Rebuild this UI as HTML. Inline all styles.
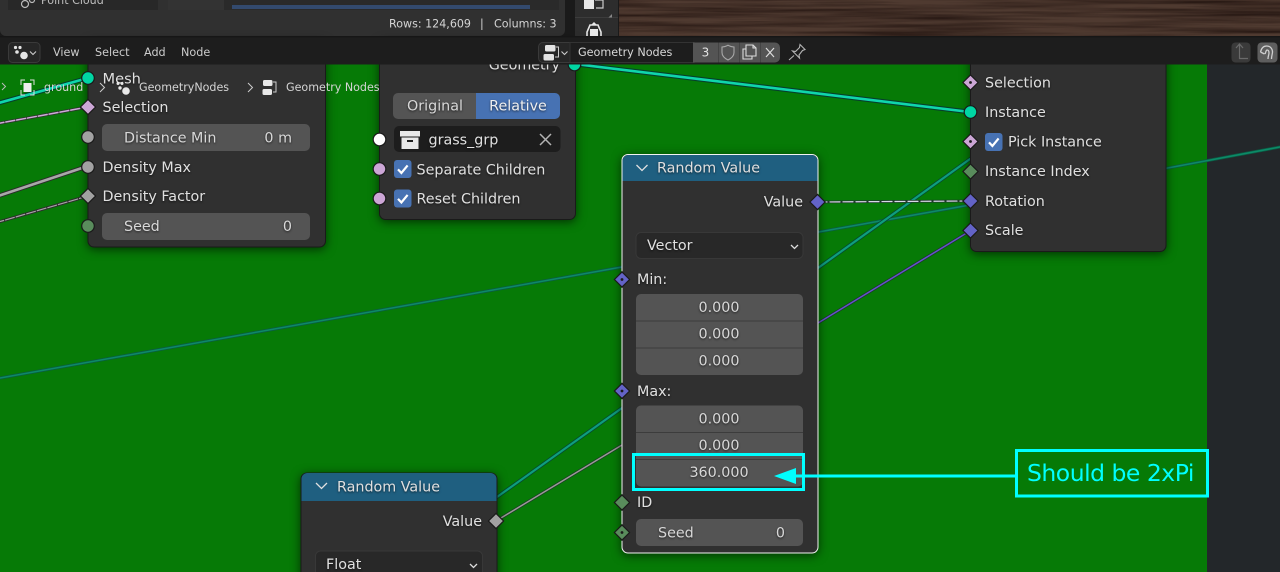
<!DOCTYPE html>
<html><head><meta charset="utf-8">
<style>
html,body{margin:0;padding:0;width:1280px;height:572px;overflow:hidden;background:#1d1d1d}
svg{display:block;position:absolute;left:0;top:0}
text{font-family:"DejaVu Sans",sans-serif;font-size:14.3px;fill:#e0e0e0}
.t{filter:drop-shadow(0 1px 1px rgba(0,0,0,.6))}
.h{font-size:11.2px;fill:#cccccc}
.b{font-size:11.1px;fill:#d4d4d4}
.f{fill:#d8d8d8}
.node{filter:drop-shadow(0 2px 5px rgba(0,0,0,.6))}
.r{text-anchor:end}.m{text-anchor:middle}
</style></head><body>
<svg width="1280" height="572" viewBox="0 0 1280 572" xmlns="http://www.w3.org/2000/svg">
<defs>
<filter id="wood" x="0" y="0" width="100%" height="100%" color-interpolation-filters="sRGB">
<feTurbulence type="fractalNoise" baseFrequency="0.006 0.22" numOctaves="4" seed="7"/>
<feColorMatrix values="0 0 0 0 .16  0 0 0 0 .10  0 0 0 0 .08  2 0 0 0 -.65"/>
</filter>
<g id="dia"><path d="M0-7.6 7.6 0 0 7.6-7.6 0Z" stroke="#1a1a1a" stroke-width="1.2"/></g>
<g id="dot"><path d="M0-7.6 7.6 0 0 7.6-7.6 0Z" stroke="#1a1a1a" stroke-width="1.2"/><circle r="1.4" fill="#1a1a1a"/></g>
<g id="cir"><circle r="6.3" stroke="#1a1a1a" stroke-width="1.2"/></g>
<g id="chk"><rect width="17.5" height="18" rx="3" fill="#4772b3"/><path d="M4 9.4 7.4 13 13.6 5.4" fill="none" stroke="#fff" stroke-width="2.2"/></g>
</defs>

<!-- top area -->
<rect x="0" y="0" width="1280" height="37" fill="#1a1a1a"/>
<path d="M0 0H565V30a6 6 0 0 1-6 6H6a6 6 0 0 1-6-6Z" fill="#303030"/>
<rect x="8" y="0" width="150" height="10" fill="#282828"/>
<rect x="168" y="0" width="391" height="10" fill="#2a2a2a"/>
<rect x="168" y="0" width="56" height="10" fill="#333"/>
<rect x="232" y="5" width="298" height="4" fill="#334a6e"/>
<text x="41" y="4" class="b" style="fill:#bdbdbd">Point Cloud</text>
<circle cx="25" cy="4" r="3.5" fill="none" stroke="#bbb" stroke-width="1.2"/>
<circle cx="32" cy="0" r="2.5" fill="none" stroke="#bbb" stroke-width="1.2"/>
<text x="389" y="27.5" class="b">Rows: 124,609</text>
<text x="480" y="27.5" class="b">|</text>
<text x="494" y="27.5" class="b">Columns: 3</text>
<rect x="575" y="0" width="43" height="36" fill="#2d2d2d"/>
<rect x="575" y="17" width="43" height="1" fill="#3c3c3c"/>
<rect x="619" y="0" width="661" height="36" fill="#4f3a30"/>
<rect x="619" y="0" width="661" height="36" filter="url(#wood)"/>
<path d="M584 0H594V9H584Z" fill="#e8e8e8"/><path d="M595 0H603V8H596" fill="none" stroke="#ccc" stroke-width="1.2"/>
<path d="M612 14l-3.500 3.500H612Z" fill="#888"/>
<path d="M587 36v-4l3-7h8l3 7v4" fill="none" stroke="#e4e4e4" stroke-width="1.6"/><rect x="590" y="29" width="8" height="7" fill="#e8e8e8"/><path d="M594 22l3 3h-6Z" fill="#e8e8e8"/>

<!-- editor background -->
<rect x="0" y="64" width="1207" height="508" fill="#067a06"/>
<rect x="1207" y="64" width="73" height="508" fill="#23272a"/>

<!-- wires -->
<g fill="none" stroke-linecap="round">
<path d="M0 378 622 267 970 205 1280 147" stroke="#0a5c44" stroke-width="3"/>
<path d="M0 378 622 267 970 205 1280 147" stroke="#0d8a68" stroke-width="1.500"/>
<path d="M497 497 622 408 818 268 970 159" stroke="#054a30" stroke-width="3.800"/>
<path d="M497 497 622 408 818 268 970 159" stroke="#0e9e7e" stroke-width="2.200"/>
<path d="M496 521 622 445 818 323 970 231" stroke="#223" stroke-width="3" opacity=".7"/>
<path d="M496 521 622 445" stroke="#9c9a98" stroke-width="1.500"/>
<path d="M818 323 970 231" stroke="#6552cc" stroke-width="1.500"/>
<path d="M575 64 970 112" stroke="#06402c" stroke-width="4.800"/>
<path d="M575 64 970 112" stroke="#0fd6ac" stroke-width="2.600"/>
<path d="M817 202 970 201" stroke="#1f3a2a" stroke-width="2.800"/>
<path d="M817 202 970 201" stroke="#d8d8e8" stroke-width="1.200" stroke-dasharray="10 3"/>
<path d="M-5 104 88 78" stroke="#06402c" stroke-width="4.800"/>
<path d="M-5 104 88 78" stroke="#0fd6ac" stroke-width="2.600"/>
<path d="M-5 124 88 107" stroke="#2a3a2a" stroke-width="3.200"/>
<path d="M-5 124 88 107" stroke="#cfa8da" stroke-width="1.500" stroke-dasharray="9 2"/>
<path d="M-5 197 88 166" stroke="#2c2c2c" stroke-width="4.500"/>
<path d="M-5 197 88 166" stroke="#a8a8a8" stroke-width="2.600"/>
<path d="M-5 223 88 196" stroke="#2c2c2c" stroke-width="3"/>
<path d="M-5 223 88 196" stroke="#a4a4a4" stroke-width="1.200" stroke-dasharray="9 2"/>
</g>

<!-- node 1 -->
<g class="node"><rect x="88" y="40" width="237.500" height="207" rx="6" fill="#303030" stroke="#1a1a1a"/></g>
<rect x="102" y="124" width="208" height="27" rx="5" fill="#545454"/>
<rect x="102" y="213" width="208" height="27" rx="5" fill="#545454"/>
<g class="t">
<text x="102.500" y="83.500" style="font-size:14.600px">Mesh</text>
<text x="102.500" y="112">Selection</text>
<text x="124" y="142.500" class="f">Distance Min</text>
<text x="292" y="142.500" class="f r">0 m</text>
<text x="102.500" y="172">Density Max</text>
<text x="102.500" y="201">Density Factor</text>
<text x="124" y="231" class="f">Seed</text>
<text x="292" y="231" class="f r">0</text>
</g>
<use href="#cir" x="88" y="78" fill="#00d6a3"/>
<use href="#dia" x="88" y="107" fill="#cca6d6"/>
<use href="#cir" x="88" y="137" fill="#a1a1a1"/>
<use href="#cir" x="88" y="167" fill="#a1a1a1"/>
<use href="#dia" x="88" y="196" fill="#a1a1a1"/>
<use href="#cir" x="88" y="226" fill="#598c5c"/>

<!-- node 2 -->
<g class="node"><rect x="379.500" y="40" width="196" height="179.500" rx="6" fill="#303030" stroke="#1a1a1a"/></g>
<path d="M398 93H476V119H398a5 5 0 0 1-5-5V98a5 5 0 0 1 5-5Z" fill="#545454"/>
<path d="M476 93H555a5 5 0 0 1 5 5V114a5 5 0 0 1-5 5H476Z" fill="#4772b3"/>
<rect x="394" y="126" width="166.500" height="26" rx="5" fill="#1d1d1d"/>
<g fill="#e8e8e8"><rect x="400" y="131" width="20" height="5.500"/><path d="M401.500 137.500H418.500V149H401.500Z"/></g>
<rect x="407" y="140" width="6" height="2" fill="#1d1d1d"/>
<path d="M540 134 551 145M551 134 540 145" stroke="#b4b4b4" stroke-width="1.500" fill="none"/>
<use href="#chk" x="394" y="160"/>
<use href="#chk" x="394" y="189.500"/>
<g class="t">
<text x="560" y="69.500" class="r">Geometry</text>
<text x="435" y="110.500" class="m f">Original</text>
<text x="518" y="110.500" class="m" style="fill:#f0f0f0">Relative</text>
<text x="428.500" y="144.500">grass_grp</text>
<text x="416.500" y="174.500">Separate Children</text>
<text x="416.500" y="203.500">Reset Children</text>
</g>
<use href="#cir" x="574.500" y="64.500" fill="#00d6a3"/>
<use href="#cir" x="379.500" y="139.500" fill="#fff"/>
<use href="#cir" x="379.500" y="169" fill="#cca6d6"/>
<use href="#cir" x="379.500" y="198.500" fill="#cca6d6"/>

<!-- node 5 -->
<g class="node"><rect x="970.500" y="40" width="195.500" height="211.500" rx="6" fill="#303030" stroke="#1a1a1a"/></g>
<use href="#chk" x="985" y="133"/>
<g class="t">
<text x="985" y="87.500">Selection</text>
<text x="985" y="117">Instance</text>
<text x="1008" y="146.500">Pick Instance</text>
<text x="985" y="176">Instance Index</text>
<text x="985" y="206">Rotation</text>
<text x="985" y="235">Scale</text>
</g>
<use href="#dot" x="970.500" y="82.500" fill="#cca6d6"/>
<use href="#cir" x="970.500" y="112" fill="#00d6a3"/>
<use href="#dot" x="970.500" y="141.500" fill="#cca6d6"/>
<use href="#dia" x="970.500" y="171.500" fill="#598c5c"/>
<use href="#dia" x="970.500" y="201" fill="#6363c7"/>
<use href="#dia" x="970.500" y="230.500" fill="#6363c7"/>

<!-- node 3 Random Value vector -->
<g class="node"><rect x="622" y="154.500" width="196" height="398.500" rx="6" fill="#303030" stroke="#f2f2f2"/></g>
<path d="M622.500 181V161a6 6 0 0 1 6-6H811.500a6 6 0 0 1 6 6V181Z" fill="#1f5f80"/>
<path d="M636.500 165l5.500 5.500 5.500-5.500" fill="none" stroke="#e0e0e0" stroke-width="1.300"/>
<rect x="636" y="232.500" width="167" height="26" rx="5" fill="#282828" stroke="#383838"/>
<path d="M791 245l3.500 3.500 3.500-3.500" fill="none" stroke="#ddd" stroke-width="1.300"/>
<rect x="636" y="294" width="167" height="81" rx="5" fill="#545454"/>
<rect x="636" y="320.500" width="167" height="1" fill="#3c3c3c"/>
<rect x="636" y="347.500" width="167" height="1" fill="#3c3c3c"/>
<rect x="636" y="405.500" width="167" height="81" rx="5" fill="#545454"/>
<rect x="636" y="432" width="167" height="1" fill="#3c3c3c"/>
<rect x="636" y="459" width="167" height="1" fill="#3c3c3c"/>
<rect x="636" y="519" width="167" height="27" rx="5" fill="#545454"/>
<g class="t">
<text x="657" y="172.500">Random Value</text>
<text x="803" y="206.500" class="r">Value</text>
<text x="647" y="250">Vector</text>
<text x="637" y="284">Min:</text>
<text x="719" y="312" class="m f">0.000</text>
<text x="719" y="338.500" class="m f">0.000</text>
<text x="719" y="365.500" class="m f">0.000</text>
<text x="637" y="396">Max:</text>
<text x="719" y="423.500" class="m f">0.000</text>
<text x="719" y="450" class="m f">0.000</text>
<text x="719" y="477" class="m f">360.000</text>
<text x="637" y="507">ID</text>
<text x="658" y="537.500" class="f">Seed</text>
<text x="785" y="537.500" class="f r">0</text>
</g>
<use href="#dia" x="817.500" y="202" fill="#6363c7"/>
<use href="#dot" x="622" y="279.500" fill="#6363c7"/>
<use href="#dot" x="622" y="391" fill="#6363c7"/>
<use href="#dia" x="622" y="502.500" fill="#598c5c"/>
<use href="#dot" x="622" y="532.500" fill="#598c5c"/>

<!-- node 4 -->
<g class="node"><rect x="301" y="473" width="196" height="120" rx="6" fill="#303030" stroke="#1a1a1a"/></g>
<path d="M301.500 501V479a6 6 0 0 1 6-6H490.500a6 6 0 0 1 6 6V501Z" fill="#1f5f80"/>
<path d="M316 483l5.500 5.500 5.500-5.500" fill="none" stroke="#e0e0e0" stroke-width="1.300"/>
<rect x="315.500" y="551" width="167" height="30" rx="5" fill="#282828" stroke="#383838"/>
<path d="M470 564l3.500 3.500 3.500-3.500" fill="none" stroke="#ddd" stroke-width="1.300"/>
<g class="t">
<text x="337" y="491.500">Random Value</text>
<text x="482" y="526" class="r">Value</text>
<text x="326" y="569">Float</text>
</g>
<use href="#dia" x="496" y="521" fill="#a1a1a1"/>

<!-- header -->
<rect x="0" y="36" width="1280" height="28.500" fill="#1d1d1d"/>
<rect x="0" y="36" width="1280" height="1.500" fill="#161616"/>
<rect x="8.500" y="42.500" width="31.500" height="20" rx="4" fill="#262626" stroke="#3a3a3a"/>
<g fill="#e4e4e4"><circle cx="24" cy="55.500" r="3.800"/><circle cx="15.500" cy="47.500" r="1.600"/><circle cx="20" cy="47.500" r="1.600"/><circle cx="17" cy="52" r="1.800"/></g>
<path d="M30 51.500l3 3 3-3" fill="none" stroke="#ccc" stroke-width="1.100"/>
<text x="53" y="56" class="h">View</text>
<text x="95" y="56" class="h">Select</text>
<text x="144" y="56" class="h">Add</text>
<text x="181" y="56" class="h">Node</text>
<path d="M570 42.500H543a4.500 4.500 0 0 0-4.500 4.500V58a4.500 4.500 0 0 0 4.500 4.500H570Z" fill="#262626" stroke="#3a3a3a"/>
<g fill="#e4e4e4"><rect x="545" y="45" width="10.500" height="6.500" rx="1.500"/><rect x="543.500" y="54" width="10.500" height="6.500" rx="1.500"/></g>
<path d="M556 47h2.500v10H555" fill="none" stroke="#ccc" stroke-width="1"/>
<path d="M561.500 51.500l3 3 3-3" fill="none" stroke="#ccc" stroke-width="1.100"/>
<rect x="570" y="42.500" width="124" height="20" fill="#1d1d1d" stroke="#333"/>
<text x="578" y="56" class="h" style="fill:#d8d8d8">Geometry Nodes</text>
<path d="M693 42.500H775a5 5 0 0 1 5 5V57.500a5 5 0 0 1-5 5H693Z" fill="#545454"/>
<rect x="718" y="42.500" width="1" height="20" fill="#444"/>
<rect x="739" y="42.500" width="1" height="20" fill="#444"/>
<rect x="760" y="42.500" width="1" height="20" fill="#444"/>
<text x="705.500" y="56.500" class="m h" style="font-size:12px;fill:#e4e4e4">3</text>
<path d="M722 47c2 0 4-.7 6-1.700 2 1 4 1.700 6 1.700v5.500c0 3.500-3 6-6 7.500-3-1.500-6-4-6-7.500Z" fill="none" stroke="#a8a8a8" stroke-width="1.100"/>
<path d="M746 45h7l3 3v8h-10ZM753 45v3h3M746 49h-3v10h9v-3" fill="none" stroke="#dcdcdc" stroke-width="1.100"/>
<path d="M766 48 774 57M774 48 766 57" stroke="#dcdcdc" stroke-width="1.200" fill="none"/>
<path d="M800 44.500 805 49.500 802.500 50.500 799 55 799.500 58 792.500 51 795.500 51.500 799.500 47.500ZM794 55.500 789 60" fill="none" stroke="#b4b4b4" stroke-width="1.100"/>
<rect x="1231.500" y="42.500" width="19" height="20" rx="4" fill="#3a3a3a"/>
<path d="M1236 48l3.500-4 3.500 4M1239.500 44V58.500H1248" fill="none" stroke="#6a6a6a" stroke-width="1.200"/>
<rect x="1257.500" y="42.500" width="20" height="20" rx="4" fill="#5e5e5e"/>
<path d="M1260.500 52c1-4 3-6 6-6 4 0 6 3 6 6 0 2-1 4-1 7M1265 54c1-2 1-4 2-4 2 0 2 2 2 3 0 2-1 3-1 6M1260.500 52l4 2" fill="none" stroke="#d0d0d0" stroke-width="1.300"/>

<!-- breadcrumbs -->
<g>
<path d="M2 83l3.500 3.500L2 90" fill="none" stroke="#bbb" stroke-width="1"/>
<path d="M21 85v-5h4M30 80h4v5M34 90v5h-4M25 95h-4v-5" fill="none" stroke="#ddd" stroke-width="1"/>
<rect x="23.500" y="83" width="8" height="9" fill="#eee"/>
<text x="44" y="91" class="b">ground</text>
<path d="M100 83l4.500 4.500-4.500 4.500" fill="none" stroke="#ccc" stroke-width="1"/>
<g fill="#e8e8e8"><circle cx="126" cy="91" r="3.800"/><circle cx="118" cy="83.500" r="1.500"/><circle cx="122" cy="83.500" r="1.500"/><circle cx="120" cy="88" r="1.700"/></g>
<text x="139" y="91" class="b">GeometryNodes</text>
<path d="M248 83l4.500 4.500-4.500 4.500" fill="none" stroke="#ccc" stroke-width="1"/>
<g fill="#e8e8e8"><rect x="263" y="80" width="9.500" height="6" rx="1.500"/><rect x="262.500" y="89" width="9.500" height="6" rx="1.500"/></g>
<path d="M273 82h3v10h-3" fill="none" stroke="#ccc" stroke-width="1"/>
<text x="286" y="91" class="b">Geometry Nodes</text>
</g>

<!-- annotation -->
<rect x="633.500" y="454.500" width="170" height="35" fill="none" stroke="#00ffff" stroke-width="3"/>
<path d="M790 476H1016" stroke="#00ffff" stroke-width="3" fill="none"/>
<path d="M774 476 796 468V484Z" fill="#00ffff"/>
<rect x="1016.500" y="450.500" width="191" height="45.500" fill="none" stroke="#00ffff" stroke-width="3"/>
<text x="1027" y="481" style="font-size:23.500px;letter-spacing:-.5px;fill:#00ffff">Should be 2xPi</text>
</svg>
</body></html>
